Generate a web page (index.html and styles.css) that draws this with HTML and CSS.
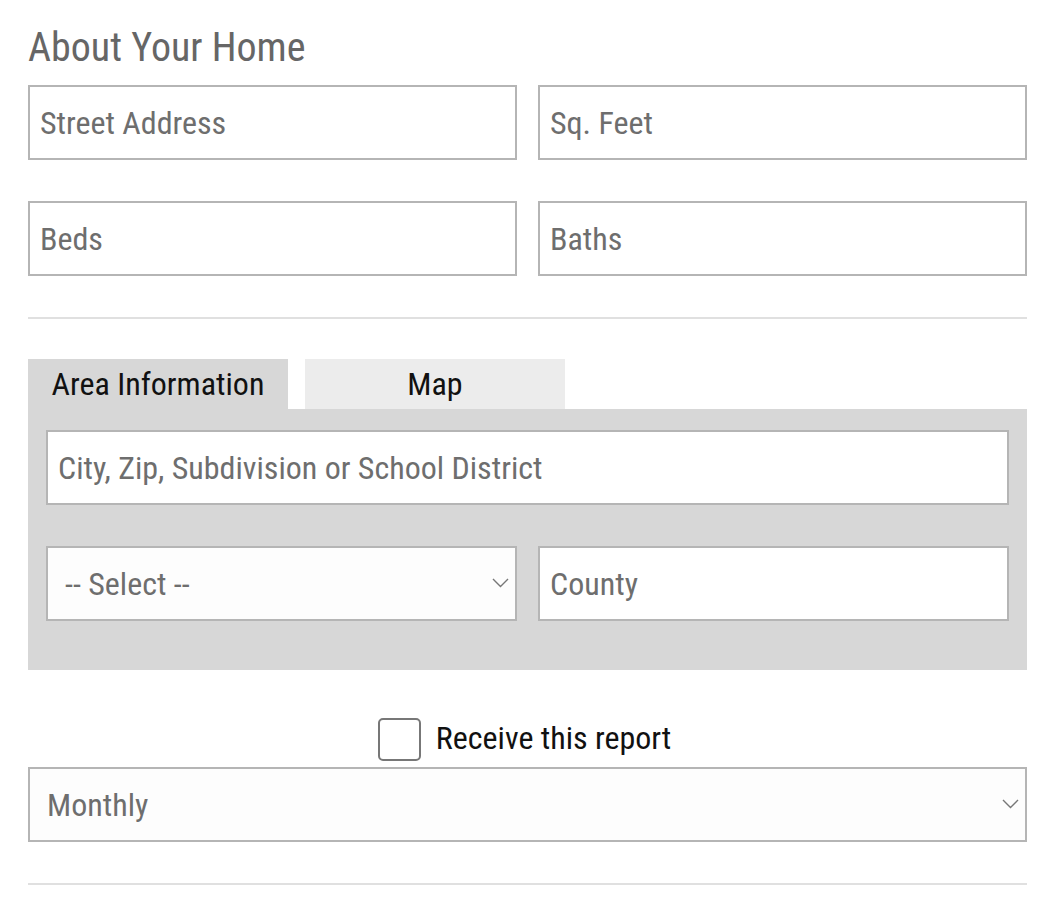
FILE: index.html
```html
<!DOCTYPE html>
<html lang="en">
<head>
    <meta charset="UTF-8">
    <meta name="viewport" content="width=device-width, initial-scale=1.0">
    <title>About Your Home</title>
    <link rel="stylesheet" href="styles.css">
</head>
<body>
    <div class="container">
        <h1>About Your Home</h1>

        <div class="form-grid">
            <input type="text" placeholder="Street Address">
            <input type="text" placeholder="Sq. Feet">
            <input type="text" placeholder="Beds">
            <input type="text" placeholder="Baths">
        </div>

        <hr class="divider">

        <div class="tabs">
            <div class="tab active">Area Information</div>
            <div class="tab">Map</div>
        </div>
        <div class="tab-panel">
            <input type="text" class="full" placeholder="City, Zip, Subdivision or School District">
            <div class="form-grid">
                <div class="select-wrap">
                    <select>
                        <option>-- Select --</option>
                    </select>
                    <svg class="chevron" width="17" height="10" viewBox="0 0 17 10"><path d="M1 1 L8.5 8.5 L16 1" fill="none" stroke="#777" stroke-width="1.4"/></svg>
                </div>
                <input type="text" placeholder="County">
            </div>
        </div>

        <div class="report-row">
            <input type="checkbox" id="receive">
            <label for="receive">Receive this report</label>
        </div>
        <div class="select-wrap">
            <select>
                <option>Monthly</option>
            </select>
            <svg class="chevron" width="17" height="10" viewBox="0 0 17 10"><path d="M1 1 L8.5 8.5 L16 1" fill="none" stroke="#777" stroke-width="1.4"/></svg>
        </div>

        <hr class="divider bottom">
    </div>
</body>
</html>
```

FILE: styles.css
```css
body {
    margin: 0;
    padding: 24px 27px 0 28px;
    font-family: "Roboto Condensed", "Roboto", sans-serif;
    font-stretch: condensed;
    background-color: #fff;
}
h1 {
    margin: 0 0 13px;
    font-size: 40px;
    font-weight: 400;
    line-height: 48px;
    color: #666;
}
.form-grid {
    display: grid;
    grid-template-columns: 1fr 1fr;
    column-gap: 21px;
    row-gap: 41px;
}
input[type="text"], select {
    width: 100%;
    height: 75px;
    box-sizing: border-box;
    border: 2px solid #b5b5b5;
    border-radius: 0;
    background-color: #fff;
    font-family: inherit;
    font-stretch: condensed;
    font-size: 32px;
    color: #666;
    padding: 0 10px;
    outline: none;
}
input::placeholder {
    color: #6e6e6e;
}
select {
    appearance: none;
    -webkit-appearance: none;
    background-color: #fdfdfd;
    padding-left: 17px;
    color: #6e6e6e;
}
.select-wrap {
    position: relative;
}
.chevron {
    position: absolute;
    right: 8px;
    top: 32px;
    pointer-events: none;
}
.divider {
    border: none;
    border-top: 2px solid #e0e0e0;
    margin: 41px 0 40px;
}
.tabs {
    display: flex;
    gap: 17px;
}
.tab {
    width: 260px;
    height: 50px;
    line-height: 50px;
    text-align: center;
    font-size: 32px;
    color: #111;
    background-color: #ececec;
}
.tab.active {
    background-color: #d7d7d7;
}
.tab-panel {
    background-color: #d7d7d7;
    padding: 21px 18px 49px;
}
.tab-panel .full {
    margin-bottom: 41px;
}
.report-row {
    display: flex;
    justify-content: center;
    align-items: center;
    gap: 15px;
    margin: 48px 0 6px;
    padding-right: 6px;
}
.report-row input {
    appearance: none;
    -webkit-appearance: none;
    width: 43px;
    height: 43px;
    margin: 0;
    border: 2px solid #777;
    border-radius: 5px;
    background: #fff;
}
.report-row label {
    font-size: 32px;
    color: #111;
    position: relative;
    top: -2px;
}
.divider.bottom {
    margin: 41px 0 0;
}
```
